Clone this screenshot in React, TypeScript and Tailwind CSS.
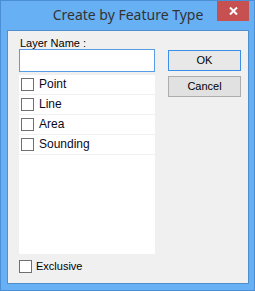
import React from 'react';

const items = ['Point', 'Line', 'Area', 'Sounding'];

const Check: React.FC = () => (
  <span className="block w-[13px] h-[13px] shrink-0 border border-[#707070] bg-white" />
);

const App: React.FC = () => {
  return (
    <div className="w-[255px] h-[291px] flex flex-col border border-[#4a8fd6] bg-[#67b0f4] pl-[6px] pr-[5px] pb-[6px] font-['Liberation_Sans',sans-serif]">
      {/* title bar */}
      <div className="h-[29px] shrink-0 relative flex items-start justify-center">
        <span className="mt-[4px] text-[14px] leading-[20px] text-[#333] font-['Noto_Sans',sans-serif]">
          Create by Feature Type
        </span>
        <button
          type="button"
          className="absolute right-0 top-0 w-[32px] h-[20px] bg-[#c75050] flex items-center justify-center"
        >
          <svg width="9" height="8" viewBox="0 0 9 8">
            <path d="M1 0.5 L8 7.5 M8 0.5 L1 7.5" stroke="#fff" strokeWidth="2" />
          </svg>
        </button>
      </div>

      {/* client area */}
      <div className="flex-1 flex border border-[#4f8fcf] bg-[#f0f0f0] pl-[11px]">
        <div className="w-[136px] flex flex-col pt-[6px]">
          <label className="h-[12px] text-[11px] leading-[12px] text-black pl-[1px]">Layer Name :</label>
          <input className="h-[23px] w-full border border-[#569de5] bg-white outline-none" />
          <div className="mt-[3px] h-[179px] bg-white">
            {items.map((it) => (
              <div key={it} className="h-[20px] flex items-start border-b border-[#f0f0f0] pl-[2px]">
                <span className="mt-[3px]"><Check /></span>
                <span className="ml-[5px] mt-[2px] text-[12px] leading-[14px] text-[#0a0a1e]">{it}</span>
              </div>
            ))}
          </div>
          <div className="mt-[6px] flex items-center h-[13px]">
            <Check />
            <span className="ml-[4px] text-[11px] leading-[13px] text-black">Exclusive</span>
          </div>
        </div>
        <div className="ml-[13px] pt-[19px] flex flex-col">
          <button
            type="button"
            className="w-[73px] h-[21px] border border-[#3c8fe6] bg-[#e8e8e8] text-[11px] leading-[19px] text-black"
          >
            OK
          </button>
          <button
            type="button"
            className="mt-[5px] w-[73px] h-[21px] border border-[#adadad] bg-[#e1e1e1] text-[11px] leading-[19px] text-black"
          >
            Cancel
          </button>
        </div>
      </div>
    </div>
  );
};

export default App;
